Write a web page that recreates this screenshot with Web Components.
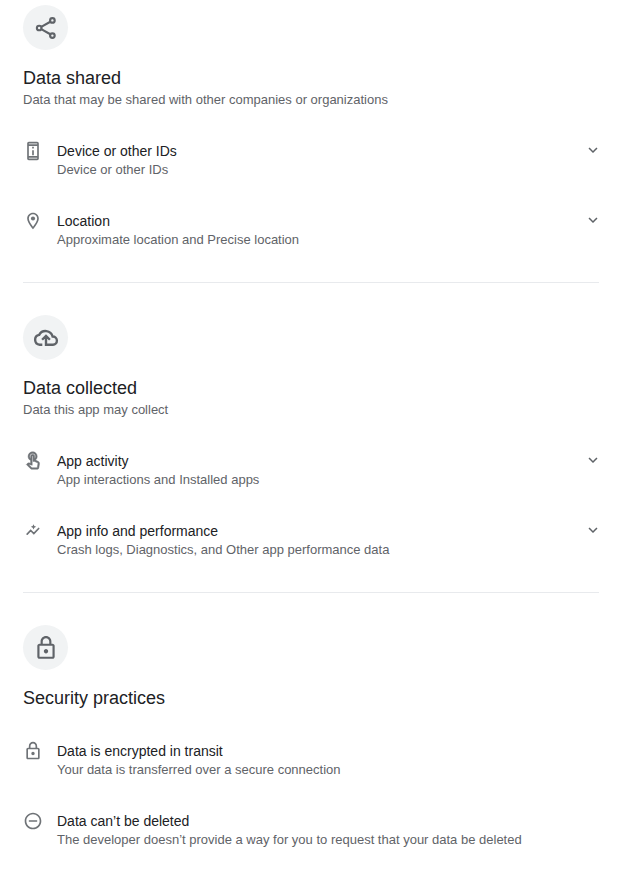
<!DOCTYPE html>
<html lang="en">
<head>
<meta charset="utf-8">
<meta name="viewport" content="width=device-width, initial-scale=1">
<title>Data safety</title>
<style>
  body {
    margin: 0;
    background: #fff;
    color: #202124;
    font-family: "Liberation Sans", Arial, sans-serif;
  }
</style>
</head>
<body>
<safety-page>
  <safety-section icon="share">
    <span slot="heading">Data shared</span>
    <span slot="note">Data that may be shared with other companies or organizations</span>
    <safety-row icon="device" expandable>
      <span slot="title">Device or other IDs</span>
      <span slot="detail">Device or other IDs</span>
    </safety-row>
    <safety-row icon="place" expandable>
      <span slot="title">Location</span>
      <span slot="detail">Approximate location and Precise location</span>
    </safety-row>
  </safety-section>
  <safety-section icon="cloud">
    <span slot="heading">Data collected</span>
    <span slot="note">Data this app may collect</span>
    <safety-row icon="touch" expandable>
      <span slot="title">App activity</span>
      <span slot="detail">App interactions and Installed apps</span>
    </safety-row>
    <safety-row icon="insights" expandable>
      <span slot="title">App info and performance</span>
      <span slot="detail">Crash logs, Diagnostics, and Other app performance data</span>
    </safety-row>
  </safety-section>
  <safety-section icon="lock">
    <span slot="heading">Security practices</span>
    <safety-row icon="lock">
      <span slot="title">Data is encrypted in transit</span>
      <span slot="detail">Your data is transferred over a secure connection</span>
    </safety-row>
    <safety-row icon="minus">
      <span slot="title">Data can’t be deleted</span>
      <span slot="detail">The developer doesn’t provide a way for you to request that your data be deleted</span>
    </safety-row>
  </safety-section>
</safety-page>

<script>
const GLYPHS = {
  share: '<g fill="none" stroke="currentColor" stroke-width="2"><path d="M7.6 11 16 6.2M7.6 13l8.4 4.8"/><circle cx="5.7" cy="12" r="2.1"/><circle cx="17.9" cy="5" r="2.1"/><circle cx="17.9" cy="19" r="2.1"/></g>',
  cloud: '<path fill="none" stroke="currentColor" stroke-width="2.2" d="M8.6 18.2H6.2A4.6 4.6 0 0 1 5.7 9.1 6.7 6.7 0 0 1 18.1 10.6 3.8 3.8 0 0 1 18.4 18.2H12V10.2M8.4 13.6 12 10l3.6 3.6"/>',
  lock: '<path fill="currentColor" d="M18 8h-1V6c0-2.76-2.24-5-5-5S7 3.24 7 6v2H6c-1.1 0-2 .9-2 2v10c0 1.1.9 2 2 2h12c1.1 0 2-.9 2-2V10c0-1.1-.9-2-2-2zM9 6c0-1.66 1.34-3 3-3s3 1.34 3 3v2H9V6zm9 14H6V10h12v10zm-6-3c1.1 0 2-.9 2-2s-.9-2-2-2-2 .9-2 2 .9 2 2 2z"/>',
  device: '<path fill="currentColor" d="M11 11h2v6h-2zM11 7h2v2h-2zM17 1.01 7 1c-1.1 0-2 .9-2 2v18c0 1.1.9 2 2 2h10c1.1 0 2-.9 2-2V3c0-1.1-.9-1.99-2-1.99zM17 21H7v-1h10v1zm0-3H7V6h10v12zm0-14H7V3h10v1z"/>',
  place: '<path fill="currentColor" d="M12 2C8.13 2 5 5.13 5 9c0 5.25 7 13 7 13s7-7.75 7-13c0-3.87-3.13-7-7-7zM7 9c0-2.76 2.24-5 5-5s5 2.24 5 5c0 2.88-2.88 7.19-5 9.88C9.92 16.21 7 11.85 7 9z"/><circle cx="12" cy="9" r="2.5" fill="currentColor"/>',
  touch: '<path fill="currentColor" stroke="currentColor" stroke-width=".5" d="M18.19 12.44l-3.24-1.62c1.29-1 2.12-2.56 2.12-4.32C17.07 3.46 14.61 1 11.57 1S6.07 3.46 6.07 6.5c0 2.13 1.22 3.98 3 4.89v3.26c-2.11-.46-2.01-.44-2.26-.44-.53 0-1.03.21-1.41.59L4 16.22l5.09 5.09c.43.44 1.03.69 1.65.69h6.3c.98 0 1.81-.7 1.97-1.67l.8-4.71c.22-1.3-.43-2.58-1.62-3.18zm-.35 2.85-.8 4.71h-6.3c-.09 0-.17-.04-.24-.1l-3.68-3.68 4.25.89V6.5c0-.28.22-.5.5-.5s.5.22.5.5v6h1.76l3.46 1.73c.4.2.62.63.55 1.06zM8.07 6.5c0-1.93 1.57-3.5 3.5-3.5s3.5 1.57 3.5 3.5c0 .95-.38 1.81-1 2.44V6.5c0-1.38-1.12-2.5-2.5-2.5s-2.5 1.12-2.5 2.5v2.44c-.62-.63-1-1.49-1-2.44z"/>',
  insights: '<path fill="none" stroke="currentColor" stroke-width="2" stroke-linecap="round" d="M5 15.8 9.2 11.4l3.8 3.8L18.8 9"/><path fill="currentColor" d="m12.6 3.8 1 2.2 2.2 1-2.2 1-1 2.2-1-2.2-2.2-1 2.2-1z"/>',
  minus: '<path fill="currentColor" d="M7 11v2h10v-2H7zm5-9C6.48 2 2 6.48 2 12s4.48 10 10 10 10-4.48 10-10S17.52 2 12 2zm0 18c-4.41 0-8-3.59-8-8s3.59-8 8-8 8 3.59 8 8-3.59 8-8 8z"/>',
  chevron: '<path fill="currentColor" d="M16.59 8.59 12 13.17 7.41 8.59 6 10l6 6 6-6z"/>'
};

customElements.define('line-icon', class extends HTMLElement {
  connectedCallback() {
    if (this.shadowRoot) return;
    this.attachShadow({ mode: 'open' }).innerHTML = `
      <style>
        :host { display: block; flex: none; width: var(--icon-size, 20px); height: var(--icon-size, 20px); }
        svg { display: block; width: 100%; height: 100%; }
      </style>
      <svg viewBox="0 0 24 24" aria-hidden="true">${GLYPHS[this.getAttribute('name')]}</svg>`;
  }
});

customElements.define('safety-row', class extends HTMLElement {
  connectedCallback() {
    if (this.shadowRoot) return;
    const open = this.hasAttribute('expandable');
    const tag = open ? 'button' : 'div';
    this.attachShadow({ mode: 'open' }).innerHTML = `
      <style>
        :host { display: block; }
        .row {
          display: flex; align-items: flex-start; gap: 14px;
          box-sizing: border-box; width: 100%; margin: 0; padding: 16px 0;
          border: 0; background: none; color: inherit; font: inherit; text-align: left;
        }
        button.row { cursor: pointer; }
        line-icon { color: #6f7377; }
        .text { flex: 1; min-width: 0; }
        .title, .detail { display: block; }
        .title { font-size: 14px; line-height: 20px; }
        .detail { font-size: 13px; line-height: 18px; color: #5f6368; }
        .end { --icon-size: 18px; margin-right: -3px; color: #5f6368; }
      </style>
      <${tag} class="row"${open ? ' type="button" aria-expanded="false"' : ''}>
        <line-icon name="${this.getAttribute('icon')}"></line-icon>
        <span class="text">
          <span class="title"><slot name="title"></slot></span>
          <span class="detail"><slot name="detail"></slot></span>
        </span>
        ${open ? '<line-icon class="end" name="chevron"></line-icon>' : ''}
      </${tag}>`;
  }
});

customElements.define('safety-section', class extends HTMLElement {
  connectedCallback() {
    if (this.shadowRoot) return;
    this.attachShadow({ mode: 'open' }).innerHTML = `
      <style>
        :host { display: block; padding: 32px 0 17px; border-bottom: 1px solid #e8eaed; }
        :host(:first-child) { padding-top: 5px; }
        :host(:last-child) { border-bottom: 0; padding-bottom: 0; }
        .badge {
          display: grid; place-items: center; width: 45px; height: 45px;
          border-radius: 50%; background: #f1f3f4; color: #5f6368; --icon-size: 26px;
        }
        header { padding: 16px 0 15px; }
        h2 { margin: 0; font-size: 18px; line-height: 24px; font-weight: 400; }
        p { margin: 0; font-size: 13px; line-height: 20px; color: #5f6368; }
      </style>
      <div class="badge"><line-icon name="${this.getAttribute('icon')}"></line-icon></div>
      <header>
        <h2><slot name="heading"></slot></h2>
        <p><slot name="note"></slot></p>
      </header>
      <slot></slot>`;
  }
});

customElements.define('safety-page', class extends HTMLElement {
  connectedCallback() {
    if (this.shadowRoot) return;
    this.attachShadow({ mode: 'open' }).innerHTML = `
      <style>
        :host { display: block; }
        main { padding: 0 29px 16px 23px; }
      </style>
      <main><slot></slot></main>`;
  }
});
</script>
</body>
</html>
